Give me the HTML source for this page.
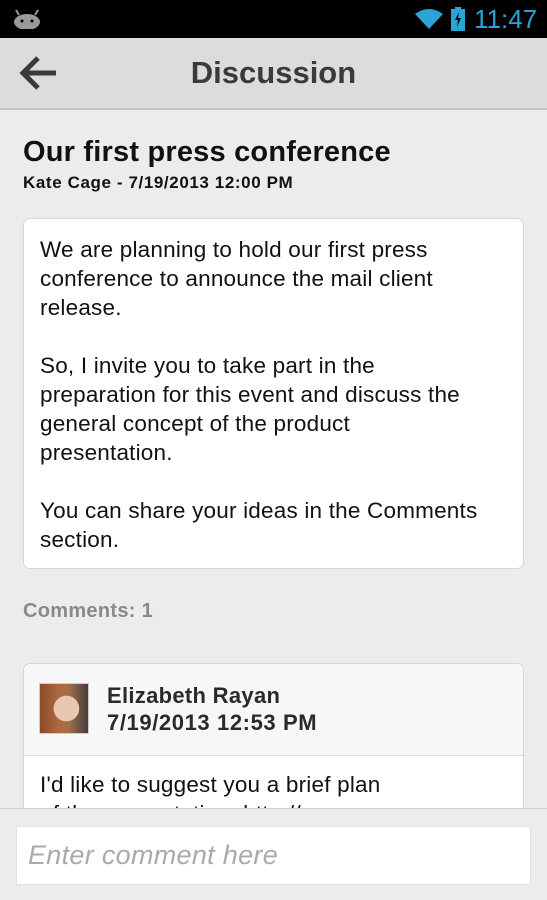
<!DOCTYPE html>
<html><head><style>
*{margin:0;padding:0;box-sizing:border-box}
html,body{width:547px;height:900px;overflow:hidden}
body{background:#ececec;font-family:"Liberation Sans",Roboto,sans-serif;position:relative}
.sb{position:absolute;top:0;left:0;width:547px;height:38px;background:#000}
.ab{position:absolute;top:38px;left:0;width:547px;height:72px;background:#dcdcdc;border-bottom:2px solid #c4c4c4}
.ab h1{position:absolute;left:0;width:547px;text-align:center;top:17px;font-size:31px;color:#3a3a3a;font-weight:bold}
.t{position:absolute;left:23px;top:136px;font-size:29px;font-weight:bold;color:#111;letter-spacing:0.2px;white-space:nowrap}
.st{position:absolute;left:23px;top:173px;font-size:17px;font-weight:bold;color:#111;letter-spacing:0.6px;white-space:nowrap}
.card{position:absolute;left:23px;width:501px;background:#fff;border:1px solid #d6d6d6;border-radius:7px}
.body{font-size:22.5px;line-height:29px;color:#111;white-space:nowrap;letter-spacing:0.2px}
.cm{position:absolute;left:23px;top:600px;font-size:20px;font-weight:bold;color:#8a8a8a;letter-spacing:0.3px}
.bb{position:absolute;top:808px;left:0;width:547px;height:92px;background:#ececec;border-top:1px solid #d0d0d0}
.in{position:absolute;left:16px;top:17px;width:515px;height:59px;background:#fff;border:1px solid #e2e2e2;font-size:27px;font-style:italic;color:#aaa;padding:13px 11px;letter-spacing:0.3px}
</style></head><body>
<div class="sb">
<svg width="30" height="20" style="position:absolute;left:13px;top:9px" viewBox="0 0 30 20"><ellipse cx="14" cy="13" rx="13" ry="8" fill="#9a9a9a"/><line x1="6" y1="6" x2="3" y2="1" stroke="#9a9a9a" stroke-width="2"/><line x1="22" y1="6" x2="25" y2="1" stroke="#9a9a9a" stroke-width="2"/><circle cx="9" cy="12" r="1.5" fill="#000"/><circle cx="19" cy="12" r="1.5" fill="#000"/></svg>
<svg width="30" height="24" style="position:absolute;left:414px;top:7px" viewBox="0 0 30 24"><path d="M15 22 L1 7 Q15 -3 29 7 Z" fill="#2aa3d6"/></svg>
<svg width="14" height="24" style="position:absolute;left:451px;top:7px" viewBox="0 0 14 24"><rect x="4" y="0" width="6" height="3" fill="#2aa3d6"/><rect x="0" y="2" width="14" height="22" fill="#2aa3d6"/><path d="M8 5 L4 13 L7 13 L6 20 L10 11 L7 11 Z" fill="#000"/></svg>
<div style="position:absolute;left:474px;top:4px;font-size:26px;color:#2aa3d6">11:47</div>
</div>
<div class="ab">
<svg width="44" height="40" style="position:absolute;left:16px;top:15px" viewBox="0 0 44 40"><path d="M40 20 H8 M22 5 L7 20 L22 35" stroke="#3a3a3a" stroke-width="5" fill="none"/></svg>
<h1>Discussion</h1></div>
<div class="t">Our first press conference</div>
<div class="st">Kate Cage - 7/19/2013 12:00 PM</div>
<div class="card body" style="top:218px;height:351px;padding:16px 16px">We are planning to hold our first press<br>conference to announce the mail client<br>release.<br><br>So, I invite you to take part in the<br>preparation for this event and discuss the<br>general concept of the product<br>presentation.<br><br>You can share your ideas in the Comments<br>section.</div>
<div class="cm">Comments: 1</div>
<div class="card" style="top:663px;height:200px;overflow:hidden">
<div style="height:92px;background:#f7f7f7;border-bottom:1px solid #ddd;position:relative">
<div style="position:absolute;left:15px;top:19px;width:50px;height:51px;border:1px solid #ccc;background:radial-gradient(circle at 55% 50%,#e8c8b0 0 35%,transparent 36%),linear-gradient(90deg,#8a4a2a,#b06a40 40%,#a0704a 60%,#4a3a3a)"></div>
<div style="position:absolute;left:83px;top:18px;font-size:22px;font-weight:bold;color:#2a2a2a;line-height:27px;letter-spacing:0.3px;white-space:nowrap">Elizabeth Rayan<br><span style="letter-spacing:0.6px">7/19/2013 12:53 PM</span></div></div>
<div class="body" style="padding:14px 16px">I'd like to suggest you a brief plan<br>of the presentation: http://</div>
</div>
<div class="bb"><div class="in">Enter comment here</div></div>
</body></html>
